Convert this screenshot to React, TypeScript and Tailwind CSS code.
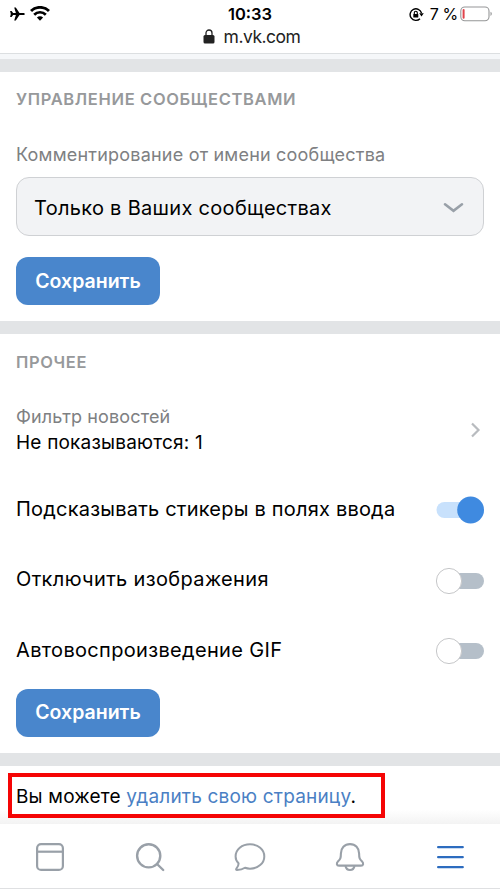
import clsx from "clsx";
import React, { useState } from "react";

const Divider: React.FC = () => <div className="h-[13px] shrink-0 bg-[#e2e4e6]" />;

const SectionTitle: React.FC<{ children: React.ReactNode }> = ({ children }) => (
  <h2 className="text-[16.5px] leading-6 font-semibold tracking-[0.65px] whitespace-nowrap text-[#97999b]">
    {children}
  </h2>
);

const SaveButton: React.FC = () => (
  <button className="h-12 w-36 shrink-0 rounded-[12px] bg-[#4986cc] pt-px text-[19.5px] font-semibold text-white">
    Сохранить
  </button>
);

interface ToggleRowProps {
  label: string;
  defaultChecked?: boolean;
  labelClassName?: string;
}

const ToggleRow: React.FC<ToggleRowProps> = ({ label, defaultChecked = false, labelClassName }) => {
  const [checked, setChecked] = useState(defaultChecked);

  return (
    <div className="flex h-[70.5px] items-center justify-between">
      <span className={clsx("pb-[3px] text-[20px] leading-7 whitespace-nowrap", labelClassName)}>
        {label}
      </span>
      <button
        role="switch"
        aria-checked={checked}
        aria-label={label}
        onClick={() => setChecked(!checked)}
        className="shrink-0"
      >
        <svg className="block" width="48" height="28" viewBox="0 0 48 28">
          <rect x="0.5" y="6" width="47.5" height="16" rx="8" fill={checked ? "#c8e1fc" : "#b5bfc9"} />
          {checked ? (
            <circle cx="34.6" cy="14" r="13.4" fill="#3f8ae0" />
          ) : (
            <circle cx="13" cy="14" r="12.6" fill="#fff" stroke="#c6c7c9" strokeWidth="1" />
          )}
        </svg>
      </button>
    </div>
  );
};

const StatusBar: React.FC = () => (
  <header className="h-[54px] shrink-0 border-b border-[#dcdfe1] bg-white">
    <div className="grid h-7 grid-cols-3 items-center">
      <div className="flex items-center gap-[5px] pl-[9px]">
        <svg width="16" height="14" viewBox="0 0 16 14">
          <path
            d="M15.8 7c0 .7-.6 1.1-1.5 1.1h-3.8L6.8 13.4H5.2l1.7-5.3H4.1l-1.5 1.9H1.1L1.8 7l-.7-3h1.5l1.5 1.9h2.8L5.2.6h1.6l3.7 5.3h3.8c.9 0 1.5.4 1.5 1.1z"
            fill="#000"
          />
        </svg>
        <svg className="-mt-0.5" width="20" height="15" viewBox="0 0 20 15" fill="none" stroke="#000">
          <path d="M1 5.1a12.7 12.7 0 0 1 18 0" strokeWidth="2.9" />
          <path d="M4.2 8.7a8.1 8.1 0 0 1 11.6 0" strokeWidth="2.7" />
          <path d="M10 14.7 6.9 11.6a4.4 4.4 0 0 1 6.2 0z" fill="#000" stroke="none" />
        </svg>
      </div>
      <div className="pt-px text-center text-[16.5px] font-semibold text-black">10:33</div>
      <div className="flex items-center justify-end pr-[7px]">
        <svg className="mr-[6px]" width="15" height="15" viewBox="0 0 15 15" fill="none">
          <path d="M12.5 6A5.8 5.8 0 1 0 11 11.7" stroke="#000" strokeWidth="1.4" />
          <path d="M10.2 6.2h4.6l-2.3 3.2z" fill="#000" />
          <rect x="4.3" y="6.9" width="5" height="3.7" rx=".6" fill="#000" />
          <path d="M5.3 7.2V5.8a1.5 1.5 0 0 1 3 0v1.4" stroke="#000" strokeWidth="1.1" />
        </svg>
        <span className="mr-[2px] text-[16px] tracking-[-0.3px] whitespace-nowrap text-black">7 %</span>
        <svg width="33" height="16" viewBox="0 0 33 16" fill="none">
          <rect x=".8" y="1" width="28.2" height="13.8" rx="4" stroke="#959697" strokeWidth="1.1" />
          <rect x="2.6" y="3" width="2" height="9.8" rx="1" fill="#e0434b" />
          <path d="M30.5 5.8c1.8.7 1.8 3.5 0 4.2z" fill="#959697" />
        </svg>
      </div>
    </div>
    <div className="flex h-[18px] items-center justify-center gap-[9px] pl-[3px]">
      <svg className="-mt-0.5" width="12" height="15" viewBox="0 0 12 15">
        <rect x=".5" y="6" width="11" height="8.6" rx="1.5" fill="#222" />
        <path d="M3 7V4a3 3 0 0 1 6 0v3" fill="none" stroke="#222" strokeWidth="1.3" />
      </svg>
      <span className="text-[17.5px] leading-5 tracking-[-0.5px] text-[#222]">m.vk.com</span>
    </div>
  </header>
);

const TabBar: React.FC = () => (
  <nav className="grid h-[65px] shrink-0 grid-cols-5 items-center justify-items-center border-b border-[#dfe0e2] bg-white pt-0.5 text-[#99a0a8]">
    <svg width="32" height="32" viewBox="0 0 32 32" fill="none" stroke="currentColor" strokeWidth="2.2">
      <rect x="3.1" y="3.1" width="25.8" height="25.8" rx="4" />
      <path d="M3 10.7h26" />
    </svg>
    <svg width="32" height="32" viewBox="0 0 32 32" fill="none" stroke="currentColor" strokeWidth="2.4">
      <circle cx="14.7" cy="14.8" r="11.6" />
      <path d="m23 23 6.2 6" strokeLinecap="round" />
    </svg>
    <svg
      width="32"
      height="32"
      viewBox="0 0 32 32"
      fill="none"
      stroke="currentColor"
      strokeWidth="2"
      strokeLinejoin="round"
    >
      <path d="M16 3.3c8.100 0 14.300 5.300 14.300 12.100s-6.200 12.300-14.300 12.300c-1.900 0-3.500-.3-5-.9-2 1.400-4.600 2.300-8 2.300-.9 0-1.100-.7-.6-1.400 1.700-2.200 2.400-3.900 2.100-5.500C2.600 20.300 1.600 17.900 1.600 15.400 1.600 8.600 7.900 3.300 16 3.300z" />
    </svg>
    <svg
      width="32"
      height="32"
      viewBox="0 0 32 32"
      fill="none"
      stroke="currentColor"
      strokeWidth="2.1"
      strokeLinejoin="round"
    >
      <path d="M16 3.1c5.500 0 9.100 4 9.100 9.400 0 4.600.6 5.600 2.800 7.700 1.100 1.100 1.400 2 1.200 3-.2.900-.9 1.400-2.100 1.400H5c-1.200 0-1.900-.5-2.100-1.400-.2-1 .1-1.900 1.200-3 2.200-2.100 2.800-3.100 2.800-7.700 0-5.400 3.600-9.400 9.100-9.400z" />
      <path d="M11.500 25c.5 2.700 2.100 4 4.500 4s4-1.300 4.500-4" />
    </svg>
    <svg
      width="32"
      height="32"
      viewBox="0 0 32 32"
      fill="none"
      stroke="#2d6cbf"
      strokeWidth="2.4"
      strokeLinecap="round"
    >
      <path d="M4.2 6.1h24.500M4.200 16.100h24.500M4.200 26.100h24.500" />
    </svg>
  </nav>
);

const App: React.FC = () => (
  <div className="flex h-[889px] w-[500px] flex-col overflow-hidden bg-white font-['Inter','Noto_Sans',sans-serif] text-black">
    <StatusBar />
    <div className="h-[5px] shrink-0 bg-[#f5f7f9]" />
    <Divider />

    <section className="flex h-[249px] shrink-0 flex-col px-4 pt-[15px]">
      <SectionTitle>УПРАВЛЕНИЕ СООБЩЕСТВАМИ</SectionTitle>
      <label className="mt-8 text-[18px] leading-6 tracking-[0.21px] whitespace-nowrap text-[#7e8082]">
        Комментирование от имени сообщества
      </label>
      <button className="mt-[10px] flex h-[59px] shrink-0 items-center justify-between rounded-[13px] border border-[#cfd1d4] bg-[#f2f3f5] pr-[19px] pl-[17px]">
        <span className="pt-0.5 text-[20px] tracking-[0.3px] whitespace-nowrap">
          Только в Ваших сообществах
        </span>
        <svg className="mt-0.5" width="21" height="12" viewBox="0 0 21 12" fill="none">
          <path d="m2 2.3 8.500 6.500L19 2.300" stroke="#99a0a8" strokeWidth="2.6" strokeLinecap="round" />
        </svg>
      </button>
      <div className="mt-[21px] flex">
        <SaveButton />
      </div>
    </section>
    <Divider />

    <section className="flex h-[419px] shrink-0 flex-col px-4 pt-4">
      <SectionTitle>ПРОЧЕЕ</SectionTitle>
      <div className="mt-[30px] flex items-center justify-between">
        <div>
          <p className="text-[18px] leading-[26px] tracking-[0.14px] text-[#7e8082]">Фильтр новостей</p>
          <p className="text-[19px] leading-[26px] tracking-[0.2px]">Не показываются: 1</p>
        </div>
        <svg className="mr-[3px]" width="11" height="16" viewBox="0 0 11 16" fill="none">
          <path d="m2 1.500 6.500 6.500L2 14.500" stroke="#b8bbbf" strokeWidth="2.2" />
        </svg>
      </div>
      <div className="mt-[19px]">
        <ToggleRow
          label="Подсказывать стикеры в полях ввода"
          labelClassName="tracking-[0.21px]"
          defaultChecked
        />
        <ToggleRow label="Отключить изображения" labelClassName="tracking-[0.35px]" />
        <ToggleRow label="Автовоспроизведение GIF" labelClassName="tracking-[0.33px]" />
      </div>
      <div className="mt-0.5 flex">
        <SaveButton />
      </div>
    </section>
    <Divider />

    <section className="h-[58px] shrink-0 bg-linear-to-b from-white from-75% to-[#f3f3f3] pt-[7px] pl-2">
      <div className="flex h-[45px] w-[377px] items-center border-4 border-[#f50505] bg-white pt-[3px] pl-1">
        <p className="text-[19px] tracking-[0.19px] whitespace-nowrap">
          Вы можете{" "}
          <a href="#delete" className="text-[#4a7fc4]">
            удалить свою страницу
          </a>
          .
        </p>
      </div>
    </section>
    <TabBar />
  </div>
);

export default App;
